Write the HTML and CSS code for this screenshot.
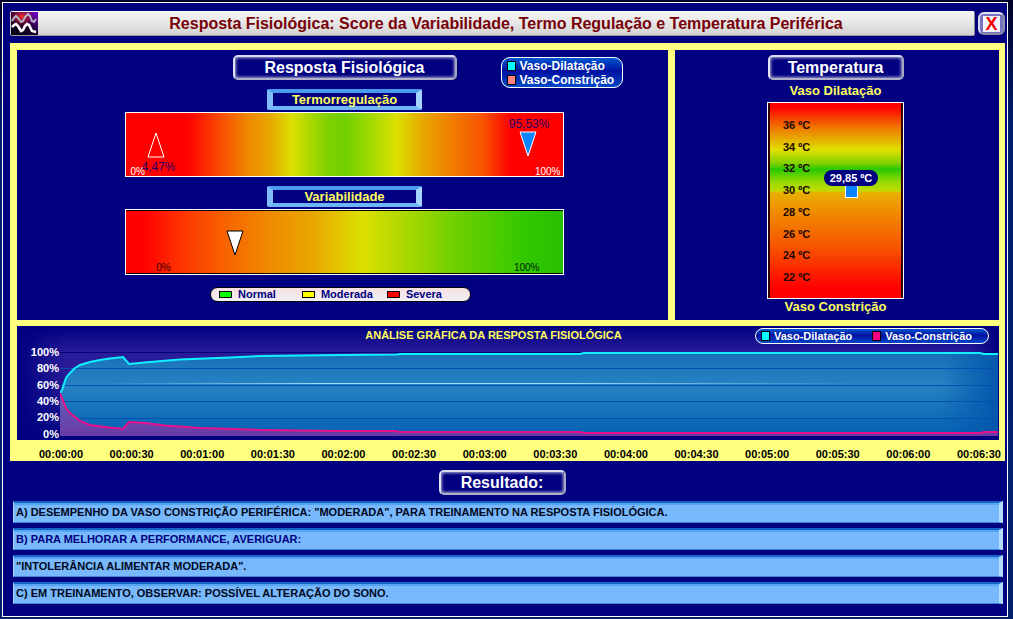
FILE: index.html
```html
<!DOCTYPE html>
<html lang="pt-BR">
<head>
<meta charset="utf-8">
<title>Resposta Fisiológica</title>
<link rel="stylesheet" href="styles.css">
</head>
<body>
<div class="window">
  <header class="titlebar">
    <div class="title-strip">
      <svg class="logo" viewBox="0 0 27 23" aria-hidden="true">
        <defs>
          <linearGradient id="logoBg" x1="0" y1="1" x2="1" y2="0">
            <stop offset="0" stop-color="#000010"/><stop offset=".5" stop-color="#180028"/><stop offset="1" stop-color="#7a00d8"/>
          </linearGradient>
          <radialGradient id="logoRed" cx=".4" cy=".2" r=".5">
            <stop offset="0" stop-color="#f03020"/><stop offset="1" stop-color="#a01050" stop-opacity="0"/>
          </radialGradient>
        </defs>
        <rect width="27" height="23" fill="url(#logoBg)"/>
        <rect width="27" height="23" fill="url(#logoRed)"/>
        <path d="M1 9 L3 6 L5 4 L7 6 L10 10 L12 9 L14 5 L17 2 L19 4 L21 9 L23 10 L25 7" fill="none" stroke="#b9b4c4" stroke-width="2"/>
        <path d="M1 15 L3 13 L5 12 L7 14 L10 19 L12 18 L14 14 L16 12 L18 13 L21 19 L25 20" fill="none" stroke="#fff" stroke-width="2.6"/>
      </svg>
      <h1 class="title">Resposta Fisiológica: Score da Variabilidade, Termo Regulação e Temperatura Periférica</h1>
    </div>
    <button class="close" type="button" aria-label="Fechar"><span class="close-face">X</span></button>
  </header>

  <main class="board">
    <div class="top">
      <section class="panel response">
        <div class="response-head">
          <h2 class="plate plate-wide">Resposta Fisiológica</h2>
          <ul class="legend legend-stack">
            <li class="key"><i class="swatch cyan"></i>Vaso-Dilatação</li>
            <li class="key"><i class="swatch salmon"></i>Vaso-Constrição</li>
          </ul>
        </div>
        <h3 class="tag">Termorregulação</h3>
        <div class="bar bar-thermo">
          <svg class="marker thermo-low" viewBox="0 0 18 26"><path d="M9 1 L17 25 H1 Z" fill="none" stroke="#fff"/></svg>
          <span class="value low-value">4,47%</span>
          <svg class="marker thermo-high" viewBox="0 0 18 26"><path d="M1 1 H17 L9 25 Z" fill="#0a84ff" stroke="#fff"/></svg>
          <span class="value high-value">95,53%</span>
          <span class="limit thermo-min">0%</span>
          <span class="limit thermo-max">100%</span>
        </div>
        <h3 class="tag tag-second">Variabilidade</h3>
        <div class="bar bar-var">
          <svg class="marker var-mark" viewBox="0 0 18 26"><path d="M1 1 H17 L9 25 Z" fill="#fff" stroke="#000"/></svg>
          <span class="limit var-min">0%</span>
          <span class="limit var-max">100%</span>
        </div>
        <ul class="levels">
          <li class="level"><i class="chip green"></i>Normal</li>
          <li class="level"><i class="chip yellow"></i>Moderada</li>
          <li class="level"><i class="chip red"></i>Severa</li>
        </ul>
      </section>

      <section class="panel temperature">
        <h2 class="plate plate-mid">Temperatura</h2>
        <p class="bound">Vaso Dilatação</p>
        <div class="gauge">
          <ol class="scale">
            <li>36 ºC</li><li>34 ºC</li><li>32 ºC</li><li>30 ºC</li><li>28 ºC</li><li>26 ºC</li><li>24 ºC</li><li>22 ºC</li>
          </ol>
          <div class="reading"><span class="reading-value">29,85 ºC</span><i class="reading-mark"></i></div>
        </div>
        <p class="bound bound-low">Vaso Constrição</p>
      </section>
    </div>

    <section class="chart">
      <div class="chart-head">
        <h2 class="chart-title">ANÁLISE GRÁFICA DA RESPOSTA FISIOLÓGICA</h2>
        <ul class="legend legend-row">
          <li class="key"><i class="swatch cyan"></i>Vaso-Dilatação</li>
          <li class="key"><i class="swatch pink"></i>Vaso-Constrição</li>
        </ul>
      </div>
      <div class="chart-body">
        <ol class="percents"><li>100%</li><li>80%</li><li>60%</li><li>40%</li><li>20%</li><li>0%</li></ol>
        <svg class="plot" viewBox="60 352 938 84" preserveAspectRatio="none" role="img" aria-label="Vaso-Dilatação e Vaso-Constrição ao longo do tempo">
          <defs>
            <linearGradient id="sea" x1="0" y1="0" x2="0" y2="1">
              <stop offset="0" stop-color="#1a6fb8"/><stop offset=".38" stop-color="#2682c2"/><stop offset="1" stop-color="#0561b4"/>
            </linearGradient>
            <linearGradient id="edge" x1="0" y1="0" x2="1" y2="0">
              <stop offset="0" stop-color="#0457ac" stop-opacity="0"/><stop offset="1" stop-color="#0457ac"/>
            </linearGradient>
            <linearGradient id="shine" x1="0" y1="0" x2="1" y2="0">
              <stop offset="0" stop-color="#9fd8f4" stop-opacity="0"/><stop offset=".3" stop-color="#9fe0f8"/><stop offset=".6" stop-color="#9fe0f8"/><stop offset="1" stop-color="#9fd8f4" stop-opacity="0"/>
            </linearGradient>
            <linearGradient id="violet" x1="0" y1="0" x2="0" y2="1">
              <stop offset="0" stop-color="#5f62b8"/><stop offset="1" stop-color="#6a3aa6"/>
            </linearGradient>
          </defs>
          <path d="M60 352.500H998" stroke="#000080" fill="none"/>
          <path fill="url(#sea)" d="M60 393 L62 390 66 378 70 373 75 368 80 365 90 362 100 360 110 358.500 123 357 129 364 150 362 180 359.500 230 357.500 260 356 300 355.500 340 355 397 354.500 400 353.500 580 353.500 584 352.500 980 352.500 984 353.500 998 354 V436 H60 Z"/>
          <rect x="940" y="354" width="58" height="82" fill="url(#edge)"/>
          <path d="M60 368.500H998 M60 385.500H998 M60 401.500H998 M60 418.500H998" stroke="#0450b0" fill="none"/>
          <rect x="100" y="383" width="760" height="1" fill="url(#shine)"/>
          <path fill="url(#violet)" d="M60 393 L66 408 70 413 80 421 90 425 105 427 123 429 129 422 145 423 165 425.500 200 428 260 430 340 431 395 431 580 432.500 998 432 V436 H60 Z"/>
          <path class="line" stroke="#10f0ff" d="M60 393 L62 390 66 378 70 373 75 368 80 365 90 362 100 360 110 358.500 123 357 129 364 150 362 180 359.500 230 357.500 260 356 300 355.500 340 355 397 354.500 400 354 580 354 584 353 980 353 984 354 998 354"/>
          <path class="line" stroke="#e8108c" d="M60 393 L66 408 70 413 80 421 90 425 105 427 123 429 129 422 145 423 165 425.500 200 428 260 430 340 431 395 431 400 432 580 432 584 433 980 433 984 432 998 432"/>
        </svg>
      </div>
    </section>
    <ol class="times">
      <li>00:00:00</li><li>00:00:30</li><li>00:01:00</li><li>00:01:30</li><li>00:02:00</li><li>00:02:30</li><li>00:03:00</li><li>00:03:30</li><li>00:04:00</li><li>00:04:30</li><li>00:05:00</li><li>00:05:30</li><li>00:06:00</li><li>00:06:30</li>
    </ol>
  </main>

  <section class="results">
    <h2 class="plate plate-small">Resultado:</h2>
    <ul class="result-list">
      <li class="result">A) DESEMPENHO DA VASO CONSTRIÇÃO PERIFÉRICA: "MODERADA", PARA TREINAMENTO NA RESPOSTA FISIOLÓGICA.</li>
      <li class="result result-blue">B) PARA MELHORAR A PERFORMANCE, AVERIGUAR:</li>
      <li class="result">"INTOLERÂNCIA ALIMENTAR MODERADA".</li>
      <li class="result">C) EM TREINAMENTO, OBSERVAR: POSSÍVEL ALTERAÇÃO DO SONO.</li>
    </ul>
  </section>
</div>
</body>
</html>
```
FILE: styles.css
```css
* { box-sizing: border-box; }
body {
  margin: 0;
  padding: 2px 5px 1px 2px;
  min-height: 100vh;
  background: linear-gradient(#000028, #001c6c 20%, #00206c);
  font-family: "Liberation Sans", Arial, sans-serif;
  font-weight: bold;
}
h1, h2, h3, p, ul, ol { margin: 0; padding: 0; font-size: inherit; list-style: none; }
svg { display: block; }

.window {
  border: 1px solid #fff;
  background: #000080;
  padding: 8px 2px 12px 7px;
}

.titlebar { display: flex; align-items: center; gap: 3px; }
.title-strip {
  flex: 1;
  display: flex;
  align-items: center;
  height: 25px;
  border: 1px solid;
  border-color: #fff #888 #999 #ccc;
  border-radius: 2px;
  background: linear-gradient(#f4f4f4, #e6e6e6 50%, #d2d2d2);
}
.logo { width: 27px; height: 23px; }
.title { flex: 1; text-align: center; font-size: 16px; line-height: 23px; color: #780008; }
.close {
  width: 27px;
  height: 23px;
  padding: 1px 3px;
  border: 2px solid;
  border-color: #e4e4f4 #9090a8 #8888a0 #d8d8ec;
  border-radius: 6px;
  background: #7474c0;
  font: bold 18px/16px "Liberation Sans", Arial, sans-serif;
}
.close-face { display: block; background: #f4f4ff; color: #f00000; }

.board { margin-top: 7px; padding: 7px 6px 0 7px; background: #ffff80; }
.top { display: grid; grid-template-columns: 651fr 324fr; gap: 7px; margin-bottom: 6px; }
.panel {
  display: flex;
  flex-direction: column;
  align-items: center;
  min-width: 0;
  height: 270px;
  padding-top: 5px;
  background: #000080;
  color: #ffff60;
}
.response { padding-left: 4px; }
.temperature { padding-right: 3px; }

.plate {
  height: 25px;
  border: 2px solid;
  border-color: #dcdcf0 #a8a8c0 #b0b0c8 #e4e4f4;
  border-radius: 5px;
  box-shadow: inset 0 0 3px 1px #a4a4d0;
  font-size: 16px;
  line-height: 21px;
  text-align: center;
  color: #fff;
}
.plate-wide { width: 224px; }
.plate-mid { width: 136px; }
.plate-small { width: 127px; }

.response-head {
  display: grid;
  grid-template-columns: 1fr auto 1fr;
  width: 100%;
  height: 33px;
  align-items: start;
}
.response-head .plate { grid-column: 2; }
.legend {
  display: flex;
  border: 1px solid #fff;
  background: linear-gradient(#0058d0, #0010a0 45%, #0048c8);
  font-size: 11px;
  color: #fff;
}
.legend-stack {
  flex-direction: column;
  justify-content: center;
  justify-self: start;
  width: 122px;
  height: 31px;
  margin: 2px 0 0 44px;
  padding-left: 5px;
  border-radius: 9px;
  font-size: 12px;
}
.legend-row {
  position: absolute;
  right: 10px;
  top: 2px;
  height: 16px;
  width: 234px;
  padding-left: 5px;
  gap: 20px;
  align-items: center;
  border-radius: 8px;
}
.key { display: flex; align-items: center; gap: 4px; line-height: 14px; white-space: nowrap; }
.swatch { width: 9px; height: 10px; border: 1px solid #000; }
.cyan { background: #0ff; }
.salmon { background: #ff8080; }
.pink { background: #ff0080; }

.tag {
  width: 155px;
  height: 21px;
  margin-top: 1px;
  border: solid;
  border-width: 4px 6px;
  border-color: #4a9af0 #a4d4ff #70b4f8 #80bcfc;
  border-radius: 2px;
  font-size: 13px;
  line-height: 13px;
  text-align: center;
}
.tag-second { margin-top: 9px; }
.bar {
  position: relative;
  width: 68%;
  height: 65px;
  margin-top: 2px;
  border: 1px solid #fff;
  font-weight: normal;
}
.bar-thermo {
  background: linear-gradient(to right, #f00 14%, #f85000 22%, #f08800 28%, #e8a800 33%, #dce000 38%, #80d000 46%, #70d000 50%, #98d800 55%, #dce000 62%, #e8a800 68%, #f08000 74%, #f85000 82%, #f00 88%);
}
.bar-var {
  height: 66px;
  background: linear-gradient(to right, #f00 4%, #ff3000 12%, #f86000 22%, #f08800 32%, #e8a800 43%, #dce000 54%, #b0d800 63%, #70d000 75%, #30c800 92%, #28c000);
  box-shadow: inset 0 1px #000, inset 0 -1px #000;
}
.marker { position: absolute; width: 18px; height: 26px; }
.thermo-low { left: 5%; top: 19px; }
.thermo-high { right: 6%; top: 18px; }
.var-mark { left: 23%; top: 20px; }
.value { position: absolute; font-size: 12px; line-height: 14px; color: #28006c; }
.low-value { left: 16px; bottom: 2px; }
.high-value { right: 14px; top: 4px; }
.limit { position: absolute; font-size: 10px; line-height: 10px; color: #fff; }
.thermo-min { left: 5px; bottom: -1px; }
.thermo-max { right: 3px; bottom: -1px; }
.var-min { left: 7%; bottom: 1px; color: #300; }
.var-max { right: 24px; bottom: 1px; color: #020; }
.levels {
  display: flex;
  gap: 26px;
  width: 261px;
  height: 15px;
  margin: 12px 8px 0 0;
  padding-left: 8px;
  border: 1px solid #000;
  border-radius: 8px;
  background: linear-gradient(#f8e0e0, #f0f0f8);
  font-size: 11px;
  line-height: 13px;
  color: #000080;
}
.level { display: flex; align-items: center; gap: 6px; }
.level:last-child { margin-left: -12px; }
.chip { width: 13px; height: 7px; border: 1px solid #000; }
.green { background: #0f0; }
.yellow { background: #ff0; }
.red { background: #f00; }

.bound { margin-top: 3px; font-size: 13px; line-height: 16px; }
.bound-low { margin-top: 0; }
.gauge {
  position: relative;
  width: 137px;
  height: 197px;
  margin-top: 3px;
  border: 1px solid #fff;
  box-shadow: inset 2px 0 #300, inset -2px 0 #300;
  background: linear-gradient(#f00 2%, #f07000 12%, #e0e000 24%, #80d000 31%, #28c800 34%, #90d800 40%, #c0dc00 45%, #e8b000 46%, #f08800 57%, #f85000 75%, #f00 95%);
}
.scale {
  display: grid;
  grid-template-rows: repeat(8, 1fr);
  height: 174px;
  margin: 11px 0 0 15px;
  align-items: center;
  font-size: 11px;
  color: #200800;
}
.reading {
  position: absolute;
  left: 56px;
  top: 67px;
  display: flex;
  flex-direction: column;
  align-items: center;
}
.reading-value {
  width: 54px;
  height: 16px;
  border-radius: 8px;
  background: #000080;
  font-size: 11px;
  line-height: 16px;
  text-align: center;
  color: #fff;
}
.reading-mark { width: 13px; height: 12px; border: 1px solid #fff; border-top: 0; background: #0a84ff; }

.chart {
  position: relative;
  padding: 1px 1px 4px 0;
  background: linear-gradient(to right, #000080, transparent 5%, transparent 97%, #000080), linear-gradient(#000080, #2a1c98 24%, #2a1c98 40%, #10108c 80%, #000080 97%);
}
.chart-title { padding-right: 28px; font-size: 11px; line-height: 17px; text-align: center; color: #ffff60; }
.chart-body { display: flex; align-items: flex-start; padding-top: 8px; }
.percents {
  display: grid;
  grid-template-rows: repeat(6, 1fr);
  width: 43px;
  height: 98px;
  margin: -8px 0 -6px;
  padding-right: 1px;
  align-items: center;
  font-size: 11px;
  text-align: right;
  color: #fff;
}
.plot { flex: 1; min-width: 0; height: 84px; }
.line { fill: none; stroke-width: 2; }
.times {
  display: flex;
  justify-content: space-between;
  height: 21px;
  margin-right: -2px;
  padding: 7px 0 0 22px;
  font-size: 11px;
  line-height: 14px;
  color: #000;
}

.results { display: flex; flex-direction: column; align-items: center; padding: 9px 2px 0 3px; }
.results .plate { margin-right: 12px; }
.result-list { display: grid; gap: 5px; width: 100%; margin-top: 6px; }
.result {
  height: 22px;
  padding-left: 2px;
  border: solid;
  border-width: 2px 4px 1px 1px;
  border-color: #1464c8 #b4dcff #3c84d8 #a8d4ff;
  box-shadow: inset 0 2px #58a4f4;
  background: #78b8fc;
  font-size: 11px;
  line-height: 18px;
  color: #000820;
}
.result-blue { color: #000080; }
```
